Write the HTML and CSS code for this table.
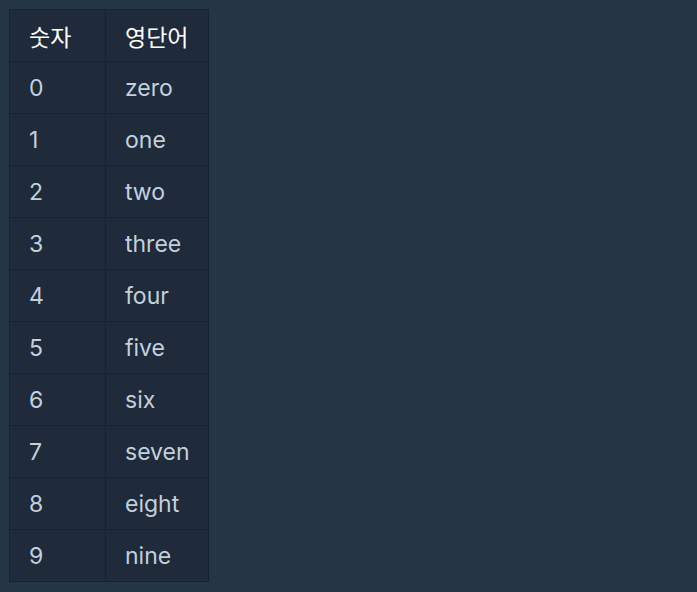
FILE: index.html
```html
<!DOCTYPE html>
<html lang="ko">
<head>
<meta charset="utf-8">
<link rel="stylesheet" href="styles.css">
</head>
<body>
<table class="tbl">
  <thead>
    <tr><th class="c1">숫자</th><th class="c2">영단어</th></tr>
  </thead>
  <tbody>
    <tr><td>0</td><td>zero</td></tr>
    <tr><td>1</td><td>one</td></tr>
    <tr><td>2</td><td>two</td></tr>
    <tr><td>3</td><td>three</td></tr>
    <tr><td>4</td><td>four</td></tr>
    <tr><td>5</td><td>five</td></tr>
    <tr><td>6</td><td>six</td></tr>
    <tr><td>7</td><td>seven</td></tr>
    <tr><td>8</td><td>eight</td></tr>
    <tr><td>9</td><td>nine</td></tr>
  </tbody>
</table>
</body>
</html>
```
FILE: styles.css
```css
html, body {
  margin: 0;
  padding: 0;
  background: #263545;
}
body {
  padding: 9px 0 0 9px;
  font-family: Inter, "Noto Sans CJK KR", sans-serif;
}
.tbl {
  border-collapse: collapse;
  background: #1f2a3b;
  border: 1px solid #172130;
}
.tbl th, .tbl td {
  border: 1px solid #172130;
  height: 52px;
  padding: 0 0 0 19px;
  text-align: left;
  font-size: 23px;
  font-weight: 400;
  box-sizing: border-box;
}
.tbl th {
  color: #ffffff;
}
.tbl td {
  color: #c3d0dc;
}
.c1 { width: 96px; }
.c2 { width: 103px; }
```
